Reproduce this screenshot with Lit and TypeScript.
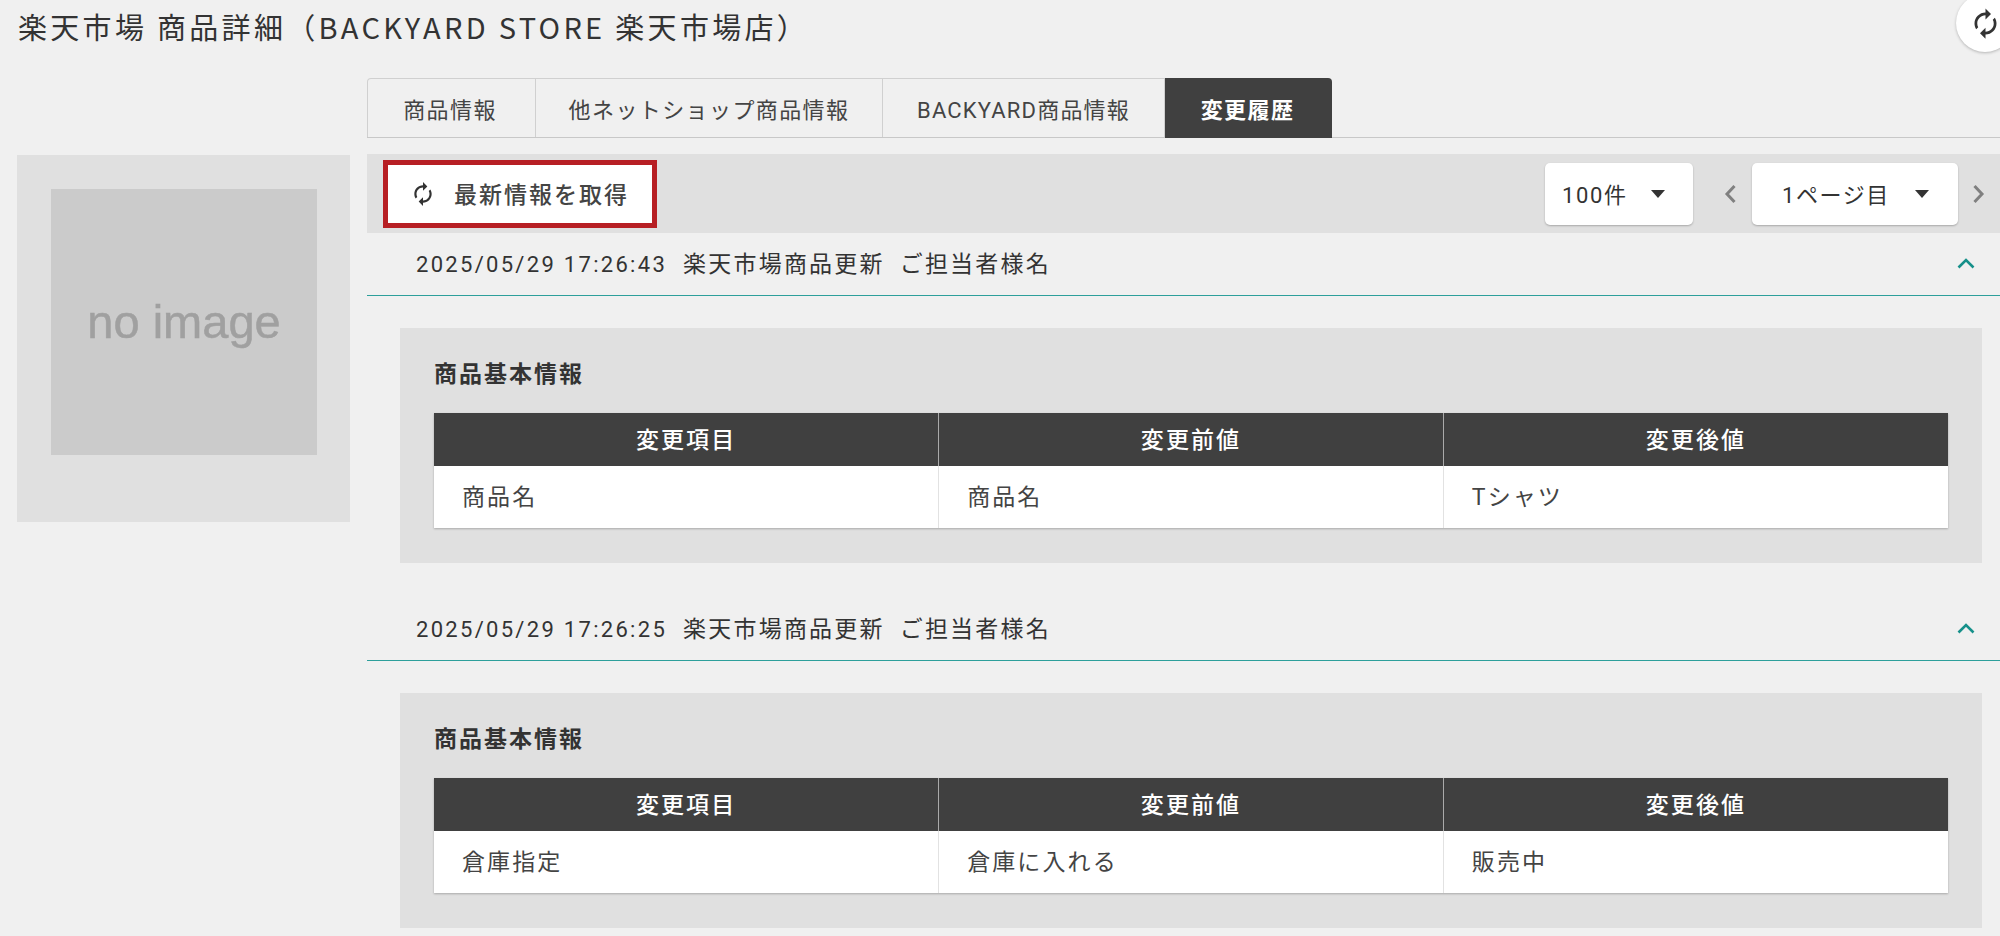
import { LitElement, html, css, svg } from "lit";
import { customElement } from "lit/decorators.js";

const refresh = svg`<path fill="currentColor" d="M12 6v3l4-4-4-4v3c-4.42 0-8 3.58-8 8 0 1.57.46 3.03 1.24 4.26L6.7 14.8c-.45-.83-.7-1.79-.7-2.8 0-3.31 2.69-6 6-6zm6.76 1.74L17.3 9.2c.44.84.7 1.79.7 2.8 0 3.31-2.69 6-6 6v-3l-4 4 4 4v-3c4.42 0 8-3.58 8-8 0-1.57-.46-3.03-1.24-4.26z"/>`;

const entries = [
  { date: "2025/05/29 17:26:43", rows: ["商品名", "商品名", "Tシャツ"] },
  { date: "2025/05/29 17:26:25", rows: ["倉庫指定", "倉庫に入れる", "販売中"] },
];

@customElement("app-root")
export class AppRoot extends LitElement {
  static styles = css`
    :host { display: block; height: 936px; overflow: hidden; position: relative; background: #f0f0f0; color: #333;
      font-family: Roboto, "Noto Sans CJK JP", sans-serif; letter-spacing: 2.5px; }
    .title { height: 60px; margin: 0; padding: 9px 0 0 18px; box-sizing: border-box; font: 400 29px/34px "Noto Sans CJK JP", sans-serif; letter-spacing: 3.3px; color: #333; white-space: nowrap; }
    .fab { position: absolute; left: 1956px; top: -6px; width: 58px; height: 58px; border-radius: 50%; background: #fff; box-shadow: 0 1px 3px rgba(0,0,0,.25); display: flex; align-items: center; justify-content: center; color: #333; }
    .fab svg { width: 33px; height: 33px; }
    .main { display: grid; grid-template-columns: 333px 1fr; column-gap: 17px; padding-left: 17px; padding-top: 18px; }
    .thumbcol { padding-top: 77px; }
    .thumb { height: 367px; background: #e0e0e0; padding: 34px; box-sizing: border-box; }
    .noimg { width: 266px; height: 266px; box-sizing: border-box; padding-bottom: 2px; background: #cbcbcb; display: flex; align-items: center; justify-content: center; font: 400 47px "Liberation Sans", sans-serif; letter-spacing: 0; color: #a0a0a0; }
    .noimg span { filter: blur(.6px); -webkit-text-stroke: .5px #a0a0a0; }
    .tabs { display: flex; height: 60px; box-sizing: border-box; border-bottom: 1px solid #c8c8c8; }
    .tab { height: 59px; display: flex; align-items: center; justify-content: center; box-sizing: border-box; border: solid #d0d0d0; border-width: 1px 1px 0 0; font-size: 22px; letter-spacing: 1.4px; color: #444; }
    .tab:first-child { border-left-width: 1px; border-top-left-radius: 4px; padding-right: 3px; }
    .tab.by { letter-spacing: 1.2px; }
    .tab.on { background: #404040; color: #fff; border: 0; height: 60px; font-weight: 700; border-top-right-radius: 4px; padding-right: 2px; }
    .toolbar { margin-top: 16px; height: 79px; background: #e0e0e0; display: flex; align-items: center; box-sizing: border-box; padding: 0 0 0 16px; }
    .refresh { width: 274px; height: 68px; box-sizing: border-box; border: 5px solid #b71f24; background: #fff; display: flex; align-items: center; font-size: 23px; font-weight: 500; letter-spacing: 2px; color: #444; padding-left: 22px; gap: 18px; }
    .refresh svg { width: 26px; height: 26px; color: #333; flex: none; }
    .refresh span { margin-bottom: 2px; }
    .spacer { flex: 1; }
    .select { height: 62px; box-sizing: border-box; background: #fff; border-radius: 5px; box-shadow: 0 1px 2px rgba(0,0,0,.25); display: flex; align-items: center; font-size: 22px; color: #333; letter-spacing: 1.6px; }
    .select span { margin-bottom: 2px; }
    .s1 { width: 148px; padding-left: 17px; }
    .s2 { width: 206px; padding-left: 30px; }
    .caret { width: 0; height: 0; border: solid transparent; border-width: 8px 7.5px 0; border-top-color: #333; margin-left: auto; }
    .s1 .caret { margin-right: 28px; }
    .s2 .caret { margin-right: 29px; }
    .pg { width: 59px; box-sizing: border-box; padding-left: 14px; display: flex; justify-content: center; color: #808080; }
    .pg.r { width: 42px; padding-left: 0; }
    .pg svg { width: 14px; height: 20px; }
    .head { height: 63px; box-sizing: border-box; border-bottom: 1px solid #2d9f9b; display: flex; align-items: center; padding: 0 25px 5px 49px; font-size: 23px; letter-spacing: 2.2px; color: #333; }
    .head .date { margin: 5px 16px 0 0; font-size: 22px; letter-spacing: 2.3px; }
    .head .d { margin-right: 15px; }
    .head svg { margin-left: auto; width: 18px; height: 12px; color: #16908a; position: relative; top: 1px; }
    .entry + .entry { margin-top: 35px; }
    .panel { margin: 32px 18px 0 33px; height: 235px; box-sizing: border-box; background: #e0e0e0; padding: 34px; }
    .panel h3 { margin: 0 0 20px; font: 700 23px/20px "Noto Sans CJK JP", sans-serif; letter-spacing: 2px; color: #333; height: 31px; }
    table { width: 100%; border-collapse: collapse; table-layout: fixed; box-shadow: 0 1px 2px rgba(0,0,0,.25); background: #fff; }
    th { height: 53px; box-sizing: border-box; padding: 0 0 4px; background: #404040; color: #fff; font-weight: 500; font-size: 23px; letter-spacing: 2.1px; border-left: 1px solid #aaa; }
    td { height: 62px; box-sizing: border-box; padding: 0 0 5px 28px; font-size: 23px; letter-spacing: 2.1px; color: #444; border-left: 1px solid #e2e2e2; }
    th:first-child, td:first-child { border-left: 0; }
  `;

  render() {
    return html`
      <h1 class="title">楽天市場 商品詳細（BACKYARD STORE 楽天市場店）</h1>
      <div class="fab"><svg viewBox="0 0 24 24">${refresh}</svg></div>
      <div class="main">
        <div class="thumbcol"><div class="thumb"><div class="noimg"><span>no image</span></div></div></div>
        <div>
          <div class="tabs">
            <div class="tab" style="width:169px">商品情報</div>
            <div class="tab" style="width:347px">他ネットショップ商品情報</div>
            <div class="tab by" style="width:282px">BACKYARD商品情報</div>
            <div class="tab on" style="width:167px">変更履歴</div>
          </div>
          <div class="toolbar">
            <div class="refresh"><svg viewBox="0 0 24 24">${refresh}</svg><span>最新情報を取得</span></div>
            <div class="spacer"></div>
            <div class="select s1"><span>100件</span><i class="caret"></i></div>
            <div class="pg"><svg viewBox="0 0 14 20"><path d="M11.5 2 4 10l7.5 8" fill="none" stroke="currentColor" stroke-width="3"/></svg></div>
            <div class="select s2"><span>1ページ目</span><i class="caret"></i></div>
            <div class="pg r"><svg viewBox="0 0 14 20"><path d="M2.5 2 10 10l-7.5 8" fill="none" stroke="currentColor" stroke-width="3"/></svg></div>
          </div>
          ${entries.map((e) => html`
            <div class="entry">
              <div class="head">
                <span class="date">${e.date}</span><span class="d">楽天市場商品更新</span><span>ご担当者様名</span>
                <svg viewBox="0 0 18 12"><path d="M1.5 10.5 9 3l7.5 7.5" fill="none" stroke="currentColor" stroke-width="2.6"/></svg>
              </div>
              <div class="panel">
                <h3>商品基本情報</h3>
                <table>
                  <thead><tr><th>変更項目</th><th>変更前値</th><th>変更後値</th></tr></thead>
                  <tbody><tr>${e.rows.map((c) => html`<td>${c}</td>`)}</tr></tbody>
                </table>
              </div>
            </div>
          `)}
        </div>
      </div>
    `;
  }
}
